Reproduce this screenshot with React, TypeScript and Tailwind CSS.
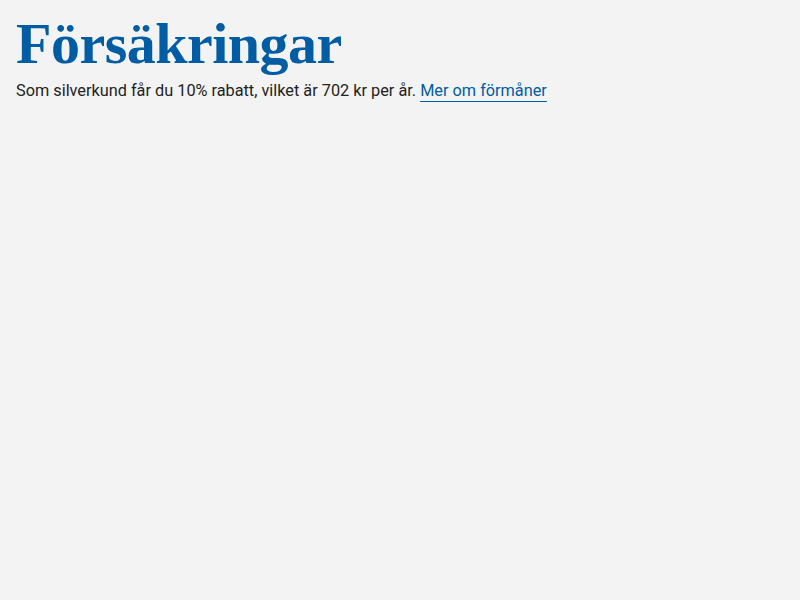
export default function App() {
  return (
    <div className="min-h-screen bg-[#f3f3f3] px-4 pt-[13px]">
      <h1 className="font-['Liberation_Serif',serif] text-[58px] font-bold leading-[62px] tracking-[-0.5px] text-[#005ca3]">
        Försäkringar
      </h1>
      <p className="mt-[4px] font-['Roboto',sans-serif] text-[16.3px] leading-6 text-[#222]">
        Som silverkund får du 10% rabatt, vilket är 702 kr per år.{" "}
        <a href="#" className="text-[#005ca3] underline decoration-1 underline-offset-[5px]">
          Mer om förmåner
        </a>
      </p>
    </div>
  );
}
